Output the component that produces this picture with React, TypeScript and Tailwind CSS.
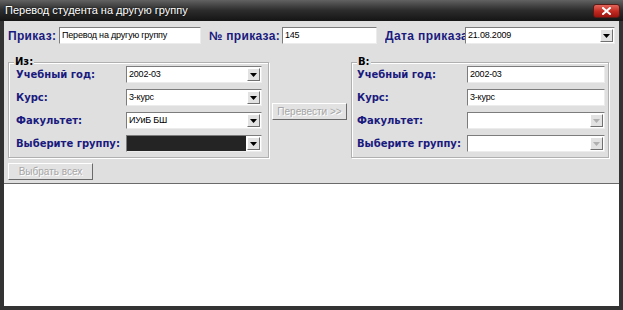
import React from "react";

function Arrow({ disabled }: { disabled?: boolean }) {
  return (
    <div className="w-[13px] h-[13px] mr-[1px] shrink-0 flex items-center justify-center bg-[#e2e2e2] border border-t-white border-l-white border-b-[#707070] border-r-[#707070]">
      <svg width="7" height="4" viewBox="0 0 7 4">
        <polygon points="0,0 7,0 3.5,4" fill={disabled ? "#b0b0b0" : "#000000"} />
      </svg>
    </div>
  );
}

function Combo({
  className,
  text,
  dark,
  disabled,
}: {
  className: string;
  text?: string;
  dark?: boolean;
  disabled?: boolean;
}) {
  return (
    <div
      className={`h-[17px] shrink-0 flex items-center bg-white border border-t-[#7c7c7c] border-l-[#7c7c7c] border-r-[#ececec] border-b-[#ececec] ${className}`}
    >
      <div
        className={`flex-1 h-full flex items-center pl-[2px] text-[9px] tracking-[-0.2px] text-black ${
          dark ? "bg-[#242424] mr-[1px]" : ""
        }`}
      >
        {text}
      </div>
      <Arrow disabled={disabled} />
    </div>
  );
}

function Input({ className, text }: { className: string; text: string }) {
  return (
    <div
      className={`h-[17px] shrink-0 flex items-center pl-[2px] bg-white text-[9px] tracking-[-0.2px] text-black border border-t-[#7c7c7c] border-l-[#7c7c7c] border-r-[#ececec] border-b-[#ececec] ${className}`}
    >
      {text}
    </div>
  );
}

function Label({ children }: { children: React.ReactNode }) {
  return (
    <div className="w-[110px] shrink-0 text-[10px] font-bold text-[#1a1a7e] font-['DejaVu_Sans',sans-serif] whitespace-nowrap">
      {children}
    </div>
  );
}

function DisabledButton({ className, children }: { className: string; children: React.ReactNode }) {
  return (
    <div
      className={`h-[17px] shrink-0 flex items-center justify-center bg-[#e2e2e2] border border-t-white border-l-white border-b-[#6a6a6a] border-r-[#6a6a6a] text-[10px] text-[#a6a6a6] [text-shadow:1px_1px_0_#ffffff] ${className}`}
    >
      {children}
    </div>
  );
}

export default function App() {
  return (
    <div className="w-[623px] h-[310px] flex flex-col bg-[#333333] overflow-hidden font-['Liberation_Sans',Arial,sans-serif]">
      {/* Title bar */}
      <div className="h-[21px] shrink-0 flex items-center justify-between pl-[5px] pr-[3px] bg-linear-to-b from-[#626262] via-[#2c2c2c] to-[#151515]">
        <span className="text-white text-[11px] leading-none [text-shadow:0_0_2px_#000]">
          Перевод студента на другую группу
        </span>
        <div className="w-[27px] h-[14px] rounded-[3px] flex items-center justify-center bg-linear-to-b from-[#e2645a] via-[#c52c22] to-[#9c1410] border border-[#5a1a16]">
          <svg width="9" height="8" viewBox="0 0 9 8">
            <path d="M1 1 L8 7 M8 1 L1 7" stroke="#ffffff" strokeWidth="2" strokeLinecap="square" />
          </svg>
        </div>
      </div>

      {/* Body */}
      <div className="flex-1 flex flex-col mx-[4px] mb-[4px] bg-[#dfdfdf]">
        <div className="h-[162px] shrink-0 flex flex-col pt-[6px] pl-[4px]">
          {/* Row 1 */}
          <div className="flex items-center h-[17px]">
            <div className="w-[51px] shrink-0 text-[12px] tracking-[0.3px] font-bold text-[#1a1a7e] whitespace-nowrap">Приказ:</div>
            <Input className="w-[142px]" text="Перевод на другую группу" />
            <div className="w-[73px] ml-[8px] shrink-0 text-[12px] tracking-[0.3px] font-bold text-[#1a1a7e] whitespace-nowrap">№ приказа:</div>
            <Input className="w-[95px]" text="145" />
            <div className="w-[80px] ml-[8px] shrink-0 overflow-hidden text-[12px] tracking-[0.4px] font-bold text-[#1a1a7e] whitespace-nowrap">
              Дата приказа
            </div>
            <Combo className="w-[150px]" text="21.08.2009" />
          </div>

          {/* Groups */}
          <div className="flex items-start mt-[18px]">
            <div className="relative w-[261px] shrink-0 border border-[#b0b0b0] shadow-[inset_1px_1px_0_#ffffff,1px_1px_0_#ffffff] pt-[3px] pb-[5px] pl-[7px] pr-[6px] flex flex-col gap-[6px]">
              <span className="absolute top-[-7px] left-[5px] px-[1px] bg-[#dfdfdf] text-[10px] leading-[12px] font-bold text-black font-['DejaVu_Sans',sans-serif]">
                Из:
              </span>
              <div className="flex items-center">
                <Label>Учебный год:</Label>
                <Combo className="w-[136px]" text="2002-03" />
              </div>
              <div className="flex items-center">
                <Label>Курс:</Label>
                <Combo className="w-[136px]" text="3-курс" />
              </div>
              <div className="flex items-center">
                <Label>Факультет:</Label>
                <Combo className="w-[136px]" text="ИУиБ БШ" />
              </div>
              <div className="flex items-center">
                <Label>Выберите группу:</Label>
                <Combo className="w-[136px]" dark />
              </div>
            </div>

            <DisabledButton className="w-[75px] ml-[3px] mt-[41px]">Перевести &gt;&gt;</DisabledButton>

            <div className="relative w-[258px] ml-[4px] shrink-0 border border-[#b0b0b0] shadow-[inset_1px_1px_0_#ffffff,1px_1px_0_#ffffff] pt-[3px] pb-[5px] pl-[5px] pr-[3px] flex flex-col gap-[6px]">
              <span className="absolute top-[-7px] left-[5px] px-[1px] bg-[#dfdfdf] text-[10px] leading-[12px] font-bold text-black font-['DejaVu_Sans',sans-serif]">
                В:
              </span>
              <div className="flex items-center">
                <Label>Учебный год:</Label>
                <Input className="w-[138px]" text="2002-03" />
              </div>
              <div className="flex items-center">
                <Label>Курс:</Label>
                <Input className="w-[138px]" text="3-курс" />
              </div>
              <div className="flex items-center">
                <Label>Факультет:</Label>
                <Combo className="w-[138px]" disabled />
              </div>
              <div className="flex items-center">
                <Label>Выберите группу:</Label>
                <Combo className="w-[138px]" disabled />
              </div>
            </div>
          </div>

          <DisabledButton className="w-[85px] mt-[5px]">Выбрать всех</DisabledButton>
        </div>

        <div className="flex-1 bg-white border-t border-[#6a6a6a]" />
      </div>
    </div>
  );
}
